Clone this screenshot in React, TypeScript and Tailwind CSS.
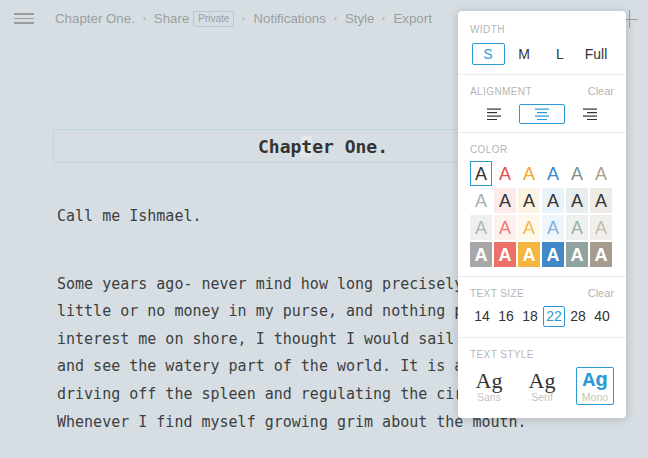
import React from "react";

const colorRows = [
  [
    "text-[#333]",
    "text-[#e0524f]",
    "text-[#f5a623]",
    "text-[#3b86cf]",
    "text-[#7a938d]",
    "text-[#a99d90]",
  ],
  [
    "text-[#adadad]",
    "bg-[#fdebeb] text-[#333]",
    "bg-[#fdf5e4] text-[#333]",
    "bg-[#eaf2f9] text-[#333]",
    "bg-[#e8eeed] text-[#333]",
    "bg-[#efece8] text-[#333]",
  ],
  [
    "bg-[#efefef] text-[#b5b5b5]",
    "bg-[#fdf0ef] text-[#ee7772]",
    "bg-[#fef8ec] text-[#f4b851]",
    "bg-[#eef5fb] text-[#7fb0df]",
    "bg-[#eef1f0] text-[#9aafa9]",
    "bg-[#f1efec] text-[#c3bab0]",
  ],
  [
    "bg-[#a7a7a7] text-white",
    "bg-[#ee6e68] text-white",
    "bg-[#f5b53e] text-white",
    "bg-[#4388c6] text-white",
    "bg-[#8fa39f] text-white",
    "bg-[#a69b8f] text-white",
  ],
];

const sizes = ["14", "16", "18", "22", "28", "40"];

function AlignIcon({ kind, color }: { kind: "left" | "center" | "right"; color: string }) {
  const rows = [14, 10, 14, 10];
  return (
    <svg width="14" height="12" viewBox="0 0 14 12">
      {rows.map((w, i) => {
        const x = kind === "left" ? 0 : kind === "right" ? 14 - w : (14 - w) / 2;
        return <rect key={i} x={x} y={i * 3.5 + 0.5} width={w} height="1.2" fill={color} />;
      })}
    </svg>
  );
}

function Dot() {
  return <span className="mx-[8px] inline-block h-[3px] w-[3px] rounded-full bg-[#bcc1c4]" />;
}

function Label({ children, clear }: { children: React.ReactNode; clear?: boolean }) {
  return (
    <div className="flex h-[12px] items-center justify-between">
      <span className="text-[10px] uppercase tracking-[0.4px] text-[#b5b5b5]">{children}</span>
      {clear && <span className="text-[11px] text-[#b5b5b5]">Clear</span>}
    </div>
  );
}

export default function App() {
  return (
    <div className="relative h-[458px] w-[648px] overflow-hidden bg-[#d7dee3] font-['Liberation_Sans',Arial,sans-serif]">
      <div className="flex h-[37px] items-center pl-[14px] text-[13.3px] text-[#9a9ea1]">
        <div className="mr-[21px] flex w-[20px] flex-col gap-[3.2px]">
          <span className="h-[1.5px] bg-[#9a9ea1]" />
          <span className="h-[1.5px] bg-[#9a9ea1]" />
          <span className="h-[1.5px] bg-[#9a9ea1]" />
        </div>
        <span>Chapter One.</span>
        <Dot />
        <span>Share</span>
        <span className="ml-[4px] rounded-[2px] border border-[#bfc4c7] px-[4px] py-[1px] text-[10px] leading-[12px]">
          Private
        </span>
        <Dot />
        <span>Notifications</span>
        <Dot />
        <span>Style</span>
        <Dot />
        <span>Export</span>
      </div>

      <div className="absolute left-[620px] top-[10px] h-[18px] w-[18px]">
        <span className="absolute left-[8.5px] top-0 h-[18px] w-[1.5px] bg-[#9a9ea1]" />
        <span className="absolute left-0 top-[8.5px] h-[1.5px] w-[18px] bg-[#9a9ea1]" />
      </div>

      <div className="w-[536px] pl-[57px] pt-[92px] font-['DejaVu_Sans_Mono',monospace] text-[#3c3f41]">
        <div className="-ml-[4px] flex h-[34px] w-[540px] items-center justify-center border border-[#bcd9e6] text-[18px] font-bold text-[#333]">
          <span>
            Chap<span className="bg-[#e3e7ea]">t</span>er One.
          </span>
        </div>
        <p className="mt-[40px] w-[536px] text-[15px] leading-[27.6px]">Call me Ishmael.</p>
        <p className="mt-[40px] w-[536px] text-[15px] leading-[27.6px]">
          Some years ago- never mind how long precisely- having little or no money in my purse, and
          nothing particular to interest me on shore, I thought I would sail about a little and see
          the watery part of the world. It is a way I have of driving off the spleen and regulating
          the circulation. Whenever I find myself growing grim about the mouth.
        </p>
      </div>

      <div className="absolute left-[458px] top-[11px] w-[168px] rounded-[4px] bg-white shadow-[0_1px_10px_rgba(0,0,0,0.2)]">
        <div className="h-[64px] border-b border-[#ececec] px-[12px] pt-[12px]">
          <Label>Width</Label>
          <div className="mt-[8px] grid grid-cols-4 text-[14px] text-[#333]">
            {["S", "M", "L", "Full"].map((s, i) => (
              <div key={s} className="flex justify-center">
                <span
                  className={`flex h-[22px] w-[33px] items-center justify-center rounded-[2px] border ${
                    i === 0 ? "border-[#2b9ad4] text-[#2b9ad4]" : "border-transparent"
                  }`}
                >
                  {s}
                </span>
              </div>
            ))}
          </div>
        </div>

        <div className="h-[58px] border-b border-[#ececec] px-[12px] pt-[10px]">
          <Label clear>Alignment</Label>
          <div className="mt-[7px] grid grid-cols-3">
            {(["left", "center", "right"] as const).map((k) => (
              <div key={k} className="flex justify-center">
                <span
                  className={`flex h-[20px] w-[46px] items-center justify-center rounded-[2px] border ${
                    k === "center" ? "border-[#2b9ad4]" : "border-transparent"
                  }`}
                >
                  <AlignIcon kind={k} color={k === "center" ? "#2b9ad4" : "#333"} />
                </span>
              </div>
            ))}
          </div>
        </div>

        <div className="h-[144px] border-b border-[#ececec] px-[12px] pt-[10px]">
          <Label>Color</Label>
          <div className="mt-[6px] grid grid-cols-[repeat(6,22px)] gap-x-[2px] gap-y-[2px]">
            {colorRows.flat().map((c, i) => (
              <span
                key={i}
                className={`flex h-[25px] items-center justify-center text-[18px] leading-none ${c} ${
                  i === 0 ? "border border-[#2b9ad4]" : ""
                } ${i >= 18 ? "font-bold" : ""}`}
              >
                A
              </span>
            ))}
          </div>
        </div>

        <div className="h-[61px] border-b border-[#ececec] px-[12px] pt-[10px]">
          <Label clear>Text size</Label>
          <div className="mt-[7px] grid grid-cols-6 text-[14px] text-[#333]">
            {sizes.map((s) => (
              <div key={s} className="flex justify-center">
                <span
                  className={`flex h-[21px] w-[22px] items-center justify-center rounded-[2px] border ${
                    s === "22" ? "border-[#2b9ad4] text-[#2b9ad4]" : "border-transparent"
                  }`}
                >
                  {s}
                </span>
              </div>
            ))}
          </div>
        </div>

        <div className="h-[80px] px-[12px] pt-[10px]">
          <Label>Text style</Label>
          <div className="mt-[7px] flex justify-between">
            {[
              { n: "Sans", f: "font-['Liberation_Serif',serif] text-[22px]" },
              { n: "Serif", f: "font-['Liberation_Serif',serif] text-[22px]" },
              { n: "Mono", f: "font-['Liberation_Mono',monospace] font-bold text-[21px]" },
            ].map((t) => (
              <div
                key={t.n}
                className={`flex h-[38px] w-[38px] flex-col items-center justify-center rounded-[2px] border ${
                  t.n === "Mono" ? "border-[#2b9ad4]" : "border-transparent"
                }`}
              >
                <span className={`leading-[21px] ${t.f} ${t.n === "Mono" ? "text-[#2b9ad4]" : "text-[#333]"}`}>
                  Ag
                </span>
                <span className="text-[10.5px] leading-[12px] text-[#c4c4c4]">{t.n}</span>
              </div>
            ))}
          </div>
        </div>
      </div>
    </div>
  );
}
